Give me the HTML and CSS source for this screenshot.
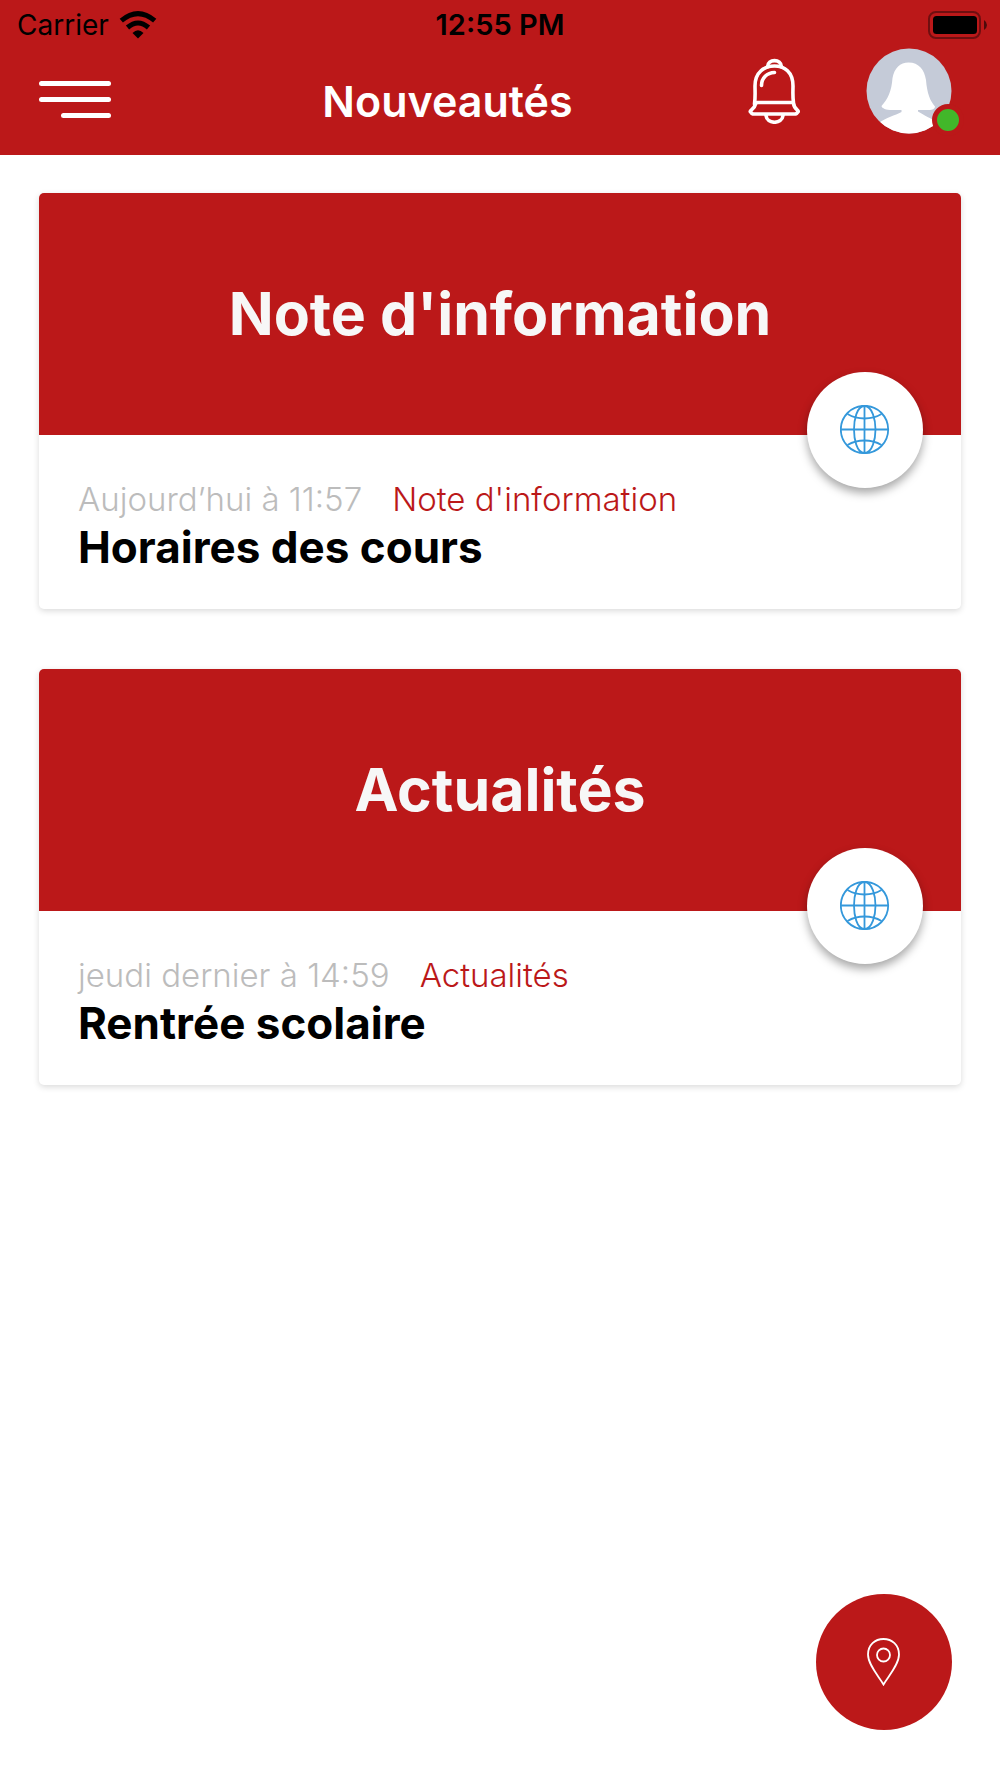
FILE: index.html
```html
<!DOCTYPE html>
<html lang="fr">
<head>
<meta charset="utf-8">
<meta name="viewport" content="width=device-width, initial-scale=1">
<title>Nouveautés</title>
<link rel="stylesheet" href="styles.css">
</head>
<body>
<svg class="sprite" aria-hidden="true">
  <symbol id="globe" viewBox="0 0 50 50">
    <g fill="none" stroke="currentColor" stroke-width="1.8">
      <circle cx="24.500" cy="24.500" r="23.700"/>
      <path d="M24.500 1V48M1 24.500H48"/>
      <path d="M24.500 1C16.500 1 14 15.500 14 24.500S16.500 48 24.500 48C32.500 48 35.500 33.500 35.500 24.500S32.500 1 24.500 1Z"/>
      <path d="M7.500 9C17.500 15 31.500 15 41.500 9M7.500 40C17.500 34 31.500 34 41.500 40"/>
    </g>
  </symbol>
</svg>
<header class="header">
  <div class="status">
    <div class="status-left">
      <span>Carrier</span>
      <svg class="wifi" viewBox="0 0 38 28" aria-hidden="true">
        <path d="M19 27.500L13.500 22Q19 16.500 24.500 22Z"/>
        <g fill="none" stroke="#000" stroke-width="5">
          <path d="M8.500 16.500Q19 7.500 29.500 16.500"/>
          <path d="M2.300 9.700Q19 -4.500 35.700 9.700"/>
        </g>
      </svg>
    </div>
    <span class="clock">12:55 PM</span>
    <svg class="battery" viewBox="0 0 60 28" aria-hidden="true">
      <rect x="1" y="1" width="51" height="26" rx="7" fill="none" stroke="#6f0f10" stroke-width="2"/>
      <rect x="5" y="5" width="44" height="18" rx="3.500"/>
      <path d="M56 9Q59 11 59 14T56 19Z" fill="#4e0a0b"/>
    </svg>
  </div>
  <nav class="nav">
    <button class="menu" type="button" aria-label="Menu">
      <span></span><span></span><span></span>
    </button>
    <h1 class="title">Nouveautés</h1>
    <div class="actions">
      <button class="bell" type="button" aria-label="Notifications">
        <svg viewBox="0 0 52 66" fill="none" stroke="#fff" stroke-width="3.600" stroke-linecap="round" stroke-linejoin="round" aria-hidden="true">
          <path d="M19.500 9C19.500 0.500 33.500 0.500 33.500 9"/>
          <path d="M8 45C6.500 51 2.200 52 2.200 53.500Q3.500 55.500 5 56H47.500Q49 55.500 50.300 53.500C50.300 52 46 51 45.500 45C44.500 38 45 34 45 28C45 14 36.500 8 26.500 8S7 14 7 28C7 34 7.500 39 6.500 46"/>
          <path d="M7 44.500H46" stroke-linecap="butt"/>
          <path d="M13.500 27.500C13.500 20 19 14.700 26.500 14.500"/>
          <path d="M18 57.500C19 66.500 34 66.500 35 57.500"/>
        </svg>
      </button>
      <a class="profile" href="#" aria-label="Profil">
        <svg class="avatar" viewBox="0 0 86 86" aria-hidden="true">
          <clipPath id="disc"><circle cx="43" cy="43" r="42.500"/></clipPath>
          <g clip-path="url(#disc)">
            <rect width="86" height="86" fill="#c5cbd8"/>
            <path fill="#fff" d="M42.500 14.500C53 14.500 58.500 22 60 32C61 45 64 53 69 58.500C69 61.500 65 62 61 62H52L52 63.500C59 68 66 70.500 69.500 74V86H13V75C20 69.500 29 67.500 35.500 64V62H26C20 62 16 60.500 15.500 58C22 51 25.500 43 26.500 30C28.500 20 34 14.500 42.500 14.500Z"/>
          </g>
        </svg>
        <span class="online"></span>
      </a>
    </div>
  </nav>
</header>

<main class="feed">
  <article class="card">
    <div class="banner">Note d'information</div>
    <a class="globe" href="#" aria-label="Public"><svg aria-hidden="true"><use href="#globe"/></svg></a>
    <div class="body">
      <p class="meta"><time>Aujourd’hui à 11:57</time><span class="category">Note d'information</span></p>
      <h2 class="headline">Horaires des cours</h2>
    </div>
  </article>
  <article class="card">
    <div class="banner">Actualités</div>
    <a class="globe" href="#" aria-label="Public"><svg aria-hidden="true"><use href="#globe"/></svg></a>
    <div class="body">
      <p class="meta"><time>jeudi dernier à 14:59</time><span class="category">Actualités</span></p>
      <h2 class="headline">Rentrée scolaire</h2>
    </div>
  </article>
</main>

<button class="locate" type="button" aria-label="Localisation">
  <svg viewBox="0 0 34 48" fill="none" stroke="#fff" stroke-width="1.800" aria-hidden="true">
    <path d="M16.500 46.500C11.500 38 1 26.500 1 16.500C1 7 8 1 16.500 1S32 7 32 16.500C32 26.500 21.500 38 16.500 46.500Z"/>
    <circle cx="16.500" cy="17" r="6.500"/>
  </svg>
</button>
</body>
</html>
```
FILE: styles.css
```css
:root {
  --red: #bb1819;
  --blue: #3498db;
}

* {
  box-sizing: border-box;
}

body {
  margin: 0;
  min-height: 100vh;
  background: #fff;
  font-family: Inter, "Liberation Sans", sans-serif;
  color: #000;
}

button {
  padding: 0;
  border: 0;
  background: none;
  cursor: pointer;
}

svg {
  display: block;
}

.sprite {
  position: absolute;
  width: 0;
  height: 0;
}

.header {
  padding-bottom: 5px;
  background: var(--red);
}

.status {
  display: grid;
  grid-template-columns: 1fr auto 1fr;
  align-items: center;
  height: 48px;
  padding: 2px 12px 0;
  font-size: 28px;
  line-height: 36px;
}

.status-left {
  display: flex;
  align-items: center;
  gap: 10px;
  padding-left: 5px;
}

.clock {
  font-size: 29px;
  font-weight: 600;
}

.wifi {
  width: 38px;
  height: 28px;
}

.battery {
  width: 60px;
  height: 28px;
  justify-self: end;
}

.nav {
  display: flex;
  align-items: center;
  min-height: 102px;
  padding: 0 48px 0 39px;
}

.menu {
  display: flex;
  flex-direction: column;
  align-items: flex-end;
  gap: 11px;
  width: 72px;
  margin-right: 36px;
}

.menu span {
  width: 100%;
  height: 5px;
  border-radius: 3px;
  background: #fff;
}

.menu span:last-child {
  width: 50px;
}

.title {
  flex: 1;
  margin: 0;
  padding-top: 3px;
  color: #fff;
  font-size: 43px;
  font-weight: 600;
  line-height: 52px;
  text-align: center;
}

.actions {
  display: flex;
  align-self: flex-start;
  align-items: center;
  gap: 66px;
}

.bell svg {
  width: 52px;
  height: 66px;
}

.profile {
  position: relative;
}

.avatar {
  width: 86px;
  height: 86px;
}

.online {
  position: absolute;
  right: -12px;
  bottom: -2px;
  width: 32px;
  height: 32px;
  border: 5px solid var(--red);
  border-radius: 50%;
  background: #42b72a;
}

.feed {
  display: grid;
  gap: 60px;
  padding: 38px 39px;
}

.card {
  position: relative;
  border-radius: 5px;
  background: #fff;
  box-shadow: 0 2px 6px rgba(0, 0, 0, 0.15);
}

.banner {
  display: flex;
  align-items: center;
  justify-content: center;
  height: 242px;
  border-radius: 5px 5px 0 0;
  background: var(--red);
  color: #f7f7f7;
  font-size: 59px;
  font-weight: 700;
  line-height: 68px;
}

.globe {
  position: absolute;
  top: 179px;
  right: 38px;
  display: grid;
  place-items: center;
  width: 116px;
  height: 116px;
  border-radius: 50%;
  background: #fff;
  box-shadow: 0 5px 10px rgba(0, 0, 0, 0.35);
  color: var(--blue);
}

.globe svg {
  width: 50px;
  height: 50px;
}

.body {
  padding: 44px 39px 34px;
}

.meta {
  display: flex;
  flex-wrap: wrap;
  column-gap: 30px;
  margin: 0;
  color: #bcbcbc;
  font-size: 33px;
  font-weight: 300;
  line-height: 40px;
}

.category {
  color: var(--red);
}

.headline {
  margin: 0;
  font-size: 44px;
  font-weight: 700;
  line-height: 56px;
}

.locate {
  position: fixed;
  right: 48px;
  bottom: 48px;
  display: grid;
  place-items: center;
  width: 136px;
  height: 136px;
  border-radius: 50%;
  background: var(--red);
}

.locate svg {
  width: 34px;
  height: 48px;
}
```
